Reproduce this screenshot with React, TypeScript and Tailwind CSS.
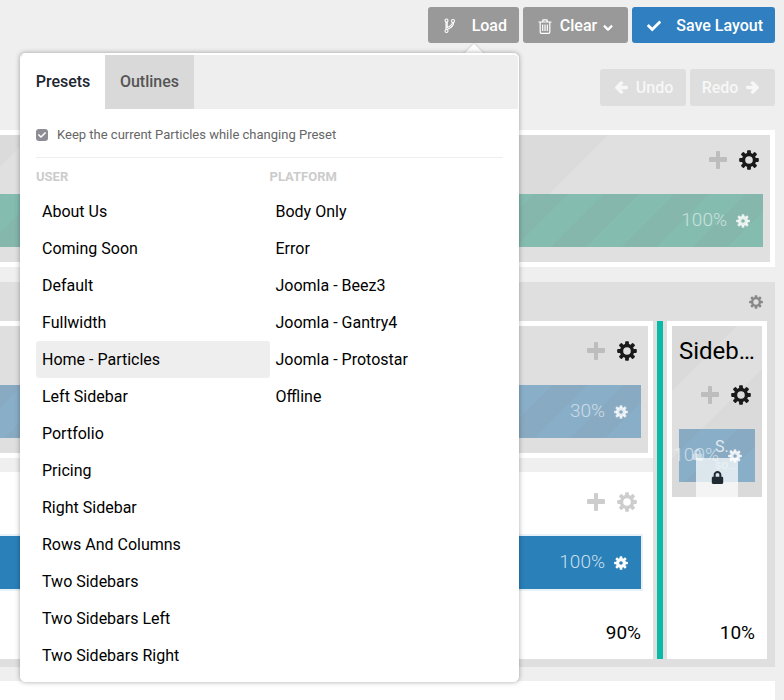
import React from 'react';
import { FaCheck, FaChevronDown, FaArrowLeft, FaArrowRight, FaLock } from 'react-icons/fa';

const user = ['About Us', 'Coming Soon', 'Default', 'Fullwidth', 'Home - Particles', 'Left Sidebar', 'Portfolio', 'Pricing', 'Right Sidebar', 'Rows And Columns', 'Two Sidebars', 'Two Sidebars Left', 'Two Sidebars Right'];
const platform = ['Body Only', 'Error', 'Joomla - Beez3', 'Joomla - Gantry4', 'Joomla - Protostar', 'Offline'];

const panelStripes = 'bg-[repeating-linear-gradient(-45deg,#e0e0e0_0px,#e0e0e0_204px,#dbdbdb_204px,#dbdbdb_408px)]';
const sideStripes = 'bg-[linear-gradient(-45deg,#dadada_0px,#dadada_91px,#dfdfdf_91px,#dfdfdf_139px,#dadada_139px)]';
const barStripes = 'bg-[repeating-linear-gradient(-45deg,transparent_0px,transparent_25px,rgba(130,130,130,0.09)_25px,rgba(130,130,130,0.09)_50px)]';

function Gear({ className, hole = 38 }: { className: string; hole?: number }) {
  const ring = 72 - hole;
  return (
    <svg viewBox="-100 -100 200 200" className={className} fill="currentColor" aria-hidden="true">
      <circle r={hole + ring / 2} fill="none" stroke="currentColor" strokeWidth={ring} />
      {[0, 45, 90, 135, 180, 225, 270, 315].map((a) => (
        <rect key={a} x="-19" y="-98" width="38" height="42" rx="8" transform={`rotate(${a})`} />
      ))}
    </svg>
  );
}

function Plus({ className }: { className: string }) {
  return (
    <svg viewBox="0 0 18 18" className={`size-[18px] ${className}`} fill="currentColor" aria-hidden="true">
      <rect x="7" y="0" width="4" height="18" rx="1" />
      <rect x="0" y="6" width="18" height="5" rx="1" />
    </svg>
  );
}

function PanelTools({ muted = false }: { muted?: boolean }) {
  return (
    <div className="flex items-center justify-end gap-3 pr-1">
      <button type="button" aria-label="Add"><Plus className={muted ? 'text-[#cdcdcd]' : 'text-[#bdbdbd]'} /></button>
      <button type="button" aria-label="Settings">
        <Gear className={`block size-5 ${muted ? 'text-[#cdcdcd]' : 'text-[#1a1a1a]'}`} />
      </button>
    </div>
  );
}

function Block({ size, className, light = 'text-white/55' }: { size: string; className: string; light?: string }) {
  return (
    <div className={`flex h-[53px] items-center justify-end gap-[9px] pr-[13px] ${className}`}>
      <span className={`pb-0.5 text-[19px] leading-6 font-light ${light}`}>{size}</span>
      <button type="button" aria-label="Block settings">
        <Gear hole={26} className={`block size-[14px] ${light === 'text-white/55' ? 'text-white/80' : 'text-white'}`} />
      </button>
    </div>
  );
}

function Branch() {
  return (
    <svg viewBox="0 0 12 16" className="h-4 w-3" fill="none" stroke="currentColor" strokeWidth="1.1" aria-hidden="true">
      <circle cx="2.5" cy="2.5" r="1.5" /><circle cx="2.5" cy="13" r="1.5" /><circle cx="9" cy="3" r="1.5" />
      <path d="M2 4v7.5M3.2 4v5.6c3-1.6 5.1-2.6 5.2-5.1M3.2 11.5c2.9-1.8 6.4-2.2 6.4-7" />
    </svg>
  );
}

function Trash() {
  return (
    <svg viewBox="0 0 14 15" className="h-[15px] w-[14px]" fill="none" stroke="currentColor" strokeWidth="1.2" aria-hidden="true">
      <path d="M0.5 3h13M4.5 3l.6-2.2h3.8L9.5 3M2.2 3v10q0 1.3 1 1.3h7.6q1 0 1-1.3V3M4.7 5.5v6.5M7 5.5v6.5M9.3 5.5v6.5" />
    </svg>
  );
}

function PresetList({ title, items }: { title: string; items: string[] }) {
  return (
    <section className="flex-1">
      <h3 className="mb-1.5 text-[13px] leading-5 font-bold text-[#cccccc]">{title}</h3>
      <ul>
        {items.map((n) => (
          <li key={n}>
            <button type="button" className={`block h-[37px] w-full rounded-[3px] px-1.5 text-left text-[16px] leading-5 text-black ${n === 'Home - Particles' ? 'bg-[#eeeeee]' : ''}`}>
              {n}
            </button>
          </li>
        ))}
      </ul>
    </section>
  );
}

function PresetPopover() {
  return (
    <div className="absolute top-full right-0 z-10 mt-[10px] w-[499px] font-normal">
      <div className="absolute -top-1.5 right-[37px] size-4 rotate-45 bg-white shadow-[0_0_3px_rgba(0,0,0,0.2)]" />
      <div className="relative rounded-[5px] border border-white bg-white pt-px shadow-[0_0_5px_rgba(0,0,0,0.35)]">
        <div role="tablist" className="flex h-[54px] rounded-tr-[4px] bg-[#eeeeee] text-[16px] font-medium">
          <button type="button" role="tab" aria-selected="true" className="w-[84px] rounded-tl-[4px] bg-white text-[#1c2530]">Presets</button>
          <button type="button" role="tab" aria-selected="false" className="w-[89px] bg-[#d9d9d9] text-[#555555]">Outlines</button>
        </div>
        <div className="px-[15px] pb-[7px]">
          <label className="flex h-[49px] items-center gap-[9px] border-b border-[#eeeeee] pt-1 text-[13px] text-[#666666]">
            <span className="grid shrink-0">
              <input type="checkbox" defaultChecked className="col-start-1 row-start-1 size-3 appearance-none rounded-[3px] bg-[#8e8c94]" />
              <FaCheck className="pointer-events-none col-start-1 row-start-1 m-auto size-2 text-white" />
            </span>
            Keep the current Particles while changing Preset
          </label>
          <div className="flex pt-[9px]">
            <PresetList title="USER" items={user} />
            <PresetList title="PLATFORM" items={platform} />
          </div>
        </div>
      </div>
    </div>
  );
}

export default function App() {
  return (
    <main className="h-screen overflow-hidden bg-[#efefef] pr-[9px] font-[Roboto,sans-serif] text-black">
      <header className="flex justify-end gap-1 pt-[7px] text-[16px] font-medium text-white">
        <div className="relative">
          <button type="button" className="flex h-9 w-[91px] items-center justify-between rounded-[3px] bg-[#999999] pt-0.5 pr-3 pl-4">
            <Branch />Load
          </button>
          <PresetPopover />
        </div>
        <button type="button" className="flex h-9 w-[105px] items-center justify-center gap-2 rounded-[3px] bg-[#999999] pt-0.5">
          <Trash />
          <span className="flex items-center gap-1.5">Clear <FaChevronDown strokeWidth={50} className="mt-1 size-2.5 overflow-visible" /></span>
        </button>
        <button type="button" className="flex h-9 w-[143px] items-center justify-between rounded-[3px] bg-[#307fc1] pt-0.5 pr-3 pl-[15px]">
          <FaCheck className="size-[14px]" />Save Layout
        </button>
      </header>
      <div className="mt-[26px] flex justify-end gap-1 text-[16px] font-medium text-[#f7f7f7]">
        <button type="button" className="flex h-[37px] w-[86px] items-center justify-center gap-2 rounded-[3px] bg-[#dedede] pl-0.5"><FaArrowLeft strokeWidth={60} className="size-[13px] overflow-visible" />Undo</button>
        <button type="button" className="flex h-[37px] w-[85px] items-center justify-center gap-2 rounded-[3px] bg-[#dedede] pr-1">Redo<FaArrowRight strokeWidth={60} className="size-[13px] overflow-visible" /></button>
      </div>

      <section className="mt-6 border-y-[5px] border-r-[5px] border-white">
        <div className={`h-[127px] pt-[15px] pr-[7px] ${panelStripes}`}>
          <PanelTools />
          <Block size="100%" className={`mt-6 bg-[#85bcb0] ${barStripes}`} />
        </div>
      </section>

      <section className="mt-[15px] bg-[#dfdfdf] pr-2 pb-2">
        <div className="flex h-[39px] items-center justify-end pr-1">
          <button type="button" aria-label="Container settings"><Gear className="block size-[14px] text-[#888888]" /></button>
        </div>
        <div className="flex h-[338px] gap-1">
          <div className="flex flex-1 flex-col">
            <div className="border-y-[5px] border-r-[5px] border-white">
              <div className="h-[127px] bg-[#dfdfdf] pt-[15px] pr-[7px]">
                <PanelTools />
                <Block size="30%" className={`mt-6 bg-[#89aec8] ${barStripes}`} />
              </div>
            </div>
            <div className="h-[14px] bg-[#efefef]" />
            <div className="flex flex-1 flex-col bg-white pt-5 pr-3">
              <PanelTools muted />
              <Block size="100%" light="text-white/75" className="mt-6 bg-[#2a80b9] shadow-[0_0_0_2px_#e8f1f8]" />
              <span className="mt-8 text-right text-[19px] leading-6">90%</span>
            </div>
          </div>
          <div className="w-1.5 bg-[#0bb9a7]" />
          <div className="flex w-[100px] flex-col justify-between bg-white p-[5px]">
            <div className={`relative h-[171px] px-[7px] pt-[9px] ${sideStripes}`}>
              <h2 className="text-[24px] leading-8 whitespace-nowrap">Sideb…</h2>
              <div className="mt-[18px]"><PanelTools /></div>
              <Block size="100%" className={`mt-6 bg-[#89aec8] ${barStripes}`} />
              <FaLock className="absolute top-[123px] left-5 size-[11px] text-white/50" />
              <div className="absolute bottom-0 left-6 flex h-[39px] w-[42px] items-center justify-center bg-white/70">
                <FaLock className="size-[13px] text-[#202a33]" />
              </div>
              <div className="absolute top-[111px] left-[43px] text-white/75">
                <div className="text-[16px] leading-5">S..</div>
                <div className="text-[12px] leading-4 text-white/50">so...</div>
              </div>
            </div>
            <span className="pr-[7px] pb-[9px] text-right text-[19px] leading-6">10%</span>
          </div>
        </div>
      </section>
      <section className="mt-[14px] h-12 bg-white" />
    </main>
  );
}
